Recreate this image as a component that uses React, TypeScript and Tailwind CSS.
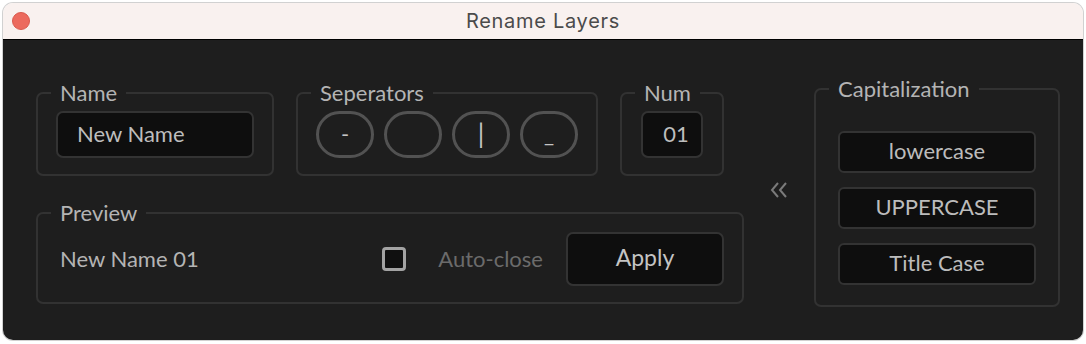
import * as React from "react";

const FONT = "font-['Lato','Open_Sans',sans-serif]";

/** Fieldset with a legend sitting on the top border line. */
function Group({
  label,
  className,
  children,
}: {
  label: string;
  className?: string;
  children: React.ReactNode;
}) {
  return (
    <fieldset
      className={`rounded-[7px] border-2 border-[#323232] px-[13px] ${className ?? ""}`}
    >
      <legend className="px-[9px] text-[22px] leading-[24px] text-[#b4b4b4]">
        {label}
      </legend>
      {children}
    </fieldset>
  );
}

function SepButton({ glyph, big }: { glyph: string; big?: boolean }) {
  return (
    <button
      className={`flex h-[47px] w-[58px] items-center justify-center rounded-full border-[3px] border-[#525252] pb-[2px] text-[#c4c4c4] ${big ? "text-[26px]" : "text-[22px]"}`}
    >
      {glyph}
    </button>
  );
}

function CapButton({ label }: { label: string }) {
  return (
    <button className="h-[42px] w-[198px] rounded-[6px] border-2 border-[#333333] bg-[#0e0e0e] pb-[3px] text-[22px] text-[#bcbcbc]">
      {label}
    </button>
  );
}

export default function App() {
  return (
    <div className="min-h-screen bg-white p-[3px]">
      <div
        className={`h-[337px] w-[1080px] overflow-hidden rounded-[10px] shadow-[0_0_0_1px_rgba(0,0,0,0.18)] ${FONT}`}
      >
        {/* ── Title bar ── */}
        <div className="relative flex h-[37px] items-center justify-center border-b border-black bg-[#f9f1ef]">
          <span className="absolute left-[9px] top-[9px] h-[18px] w-[18px] rounded-full border border-[#d95a4e] bg-[#ec6a5e]" />
          <span className="font-['Inter',sans-serif] text-[20px] tracking-[0.7px] text-[#4b4b4b]">
            Rename Layers
          </span>
        </div>

        {/* ── Body ── */}
        <div className="flex h-[300px] items-start bg-[#1e1e1e] pl-[33px] pt-[37px]">
          {/* left column */}
          <div className="mt-[4px] flex w-[708px] flex-col gap-[25px]">
            <div className="flex gap-[22px]">
              <Group label="Name" className="w-[238px] pb-[16px] pt-[6px]">
                <div className="mx-auto flex h-[47px] w-[198px] items-center rounded-[7px] border-2 border-[#333333] bg-[#0e0e0e] pb-[3px] pl-[19px] text-[22px] text-[#bdbdbd]">
                  New Name
                </div>
              </Group>

              <Group label="Seperators" className="w-[302px] pb-[16px] pt-[6px]">
                <div className="flex justify-center gap-[10px]">
                  <SepButton glyph="-" />
                  <SepButton glyph="" />
                  <SepButton glyph="|" big />
                  <SepButton glyph="_" />
                </div>
              </Group>

              <Group label="Num" className="w-[104px] pb-[16px] pt-[6px]">
                <div className="mx-auto flex h-[47px] w-[62px] items-center justify-center rounded-[7px] border-2 border-[#333333] bg-[#0e0e0e] pb-[3px] pl-[8px] text-[22px] text-[#bdbdbd]">
                  01
                </div>
              </Group>
            </div>

            <Group label="Preview" className="w-[708px] pb-[16px] pt-[7px]">
              <div className="flex items-center pl-[9px] pr-[5px]">
                <span className="flex-1 pb-[2px] text-[22px] text-[#b4b4b4]">
                  New Name 01
                </span>
                <span className="h-[24px] w-[24px] rounded-[4px] border-[3px] border-[#a3a3a3] bg-[#101010]" />
                <span className="ml-[32px] pb-[2px] text-[22px] text-[#6b6b6b]">
                  Auto-close
                </span>
                <button className="ml-[23px] h-[54px] w-[158px] rounded-[7px] border-2 border-[#333333] bg-[#0e0e0e] pb-[3px] text-[23px] text-[#c4c4c4]">
                  Apply
                </button>
              </div>
            </Group>
          </div>

          {/* collapse arrow */}
          <div className="flex w-[70px] justify-center pt-[105px]">
            <svg
              width="20"
              height="16"
              viewBox="0 0 20 16"
              fill="none"
              stroke="#7a7a7a"
              strokeWidth="2"
              aria-hidden="true"
            >
              <polyline points="9,1 3,8 9,15" />
              <polyline points="17,1 11,8 17,15" />
            </svg>
          </div>

          {/* capitalization */}
          <Group label="Capitalization" className="w-[246px] pb-[20px] pt-[30px]">
            <div className="flex flex-col items-center gap-[14px]">
              <CapButton label="lowercase" />
              <CapButton label="UPPERCASE" />
              <CapButton label="Title Case" />
            </div>
          </Group>
        </div>
      </div>
    </div>
  );
}
